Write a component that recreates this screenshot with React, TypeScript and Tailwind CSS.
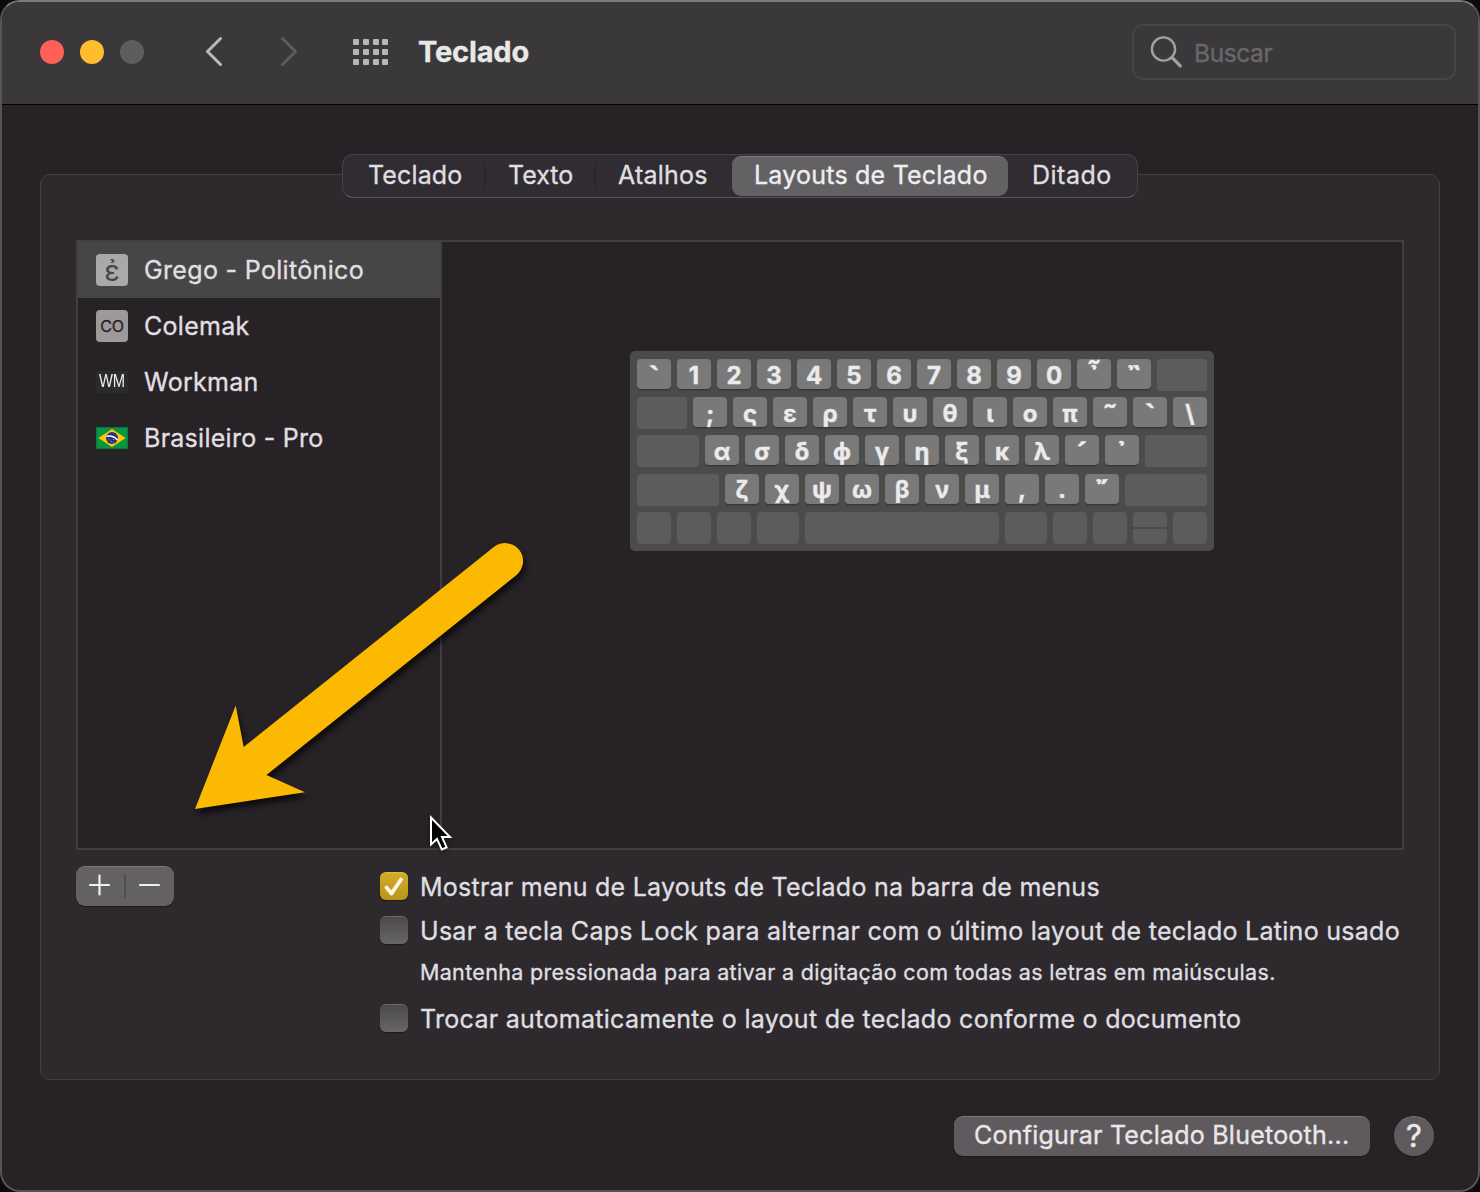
import React from 'react';

function T({ children, className = '' }: { children: string; className?: string }) {
  return <span className={`whitespace-pre [-webkit-text-stroke:0.35px] ${className}`}>{children}</span>;
}

function TitleBar() {
  return (
    <header className="flex h-[103px] shrink-0 items-center border-b border-black bg-[#3a383a] pb-0.5 pl-[38px] pr-[22px]">
      <div className="flex gap-4">
        <span className="size-6 rounded-full bg-[#ff5f57]" />
        <span className="size-6 rounded-full bg-[#febc2e]" />
        <span className="size-6 rounded-full bg-[#5e5c5f]" />
      </div>
      <svg className="mb-px ml-[60px]" width="20" height="32" viewBox="0 0 20 32" fill="none" stroke="#bbb9bc" strokeWidth="3" strokeLinecap="round" strokeLinejoin="round">
        <path d="M16.500 2.500 3.500 15.500l13 13" />
      </svg>
      <svg className="mb-px ml-[55px]" width="20" height="32" viewBox="0 0 20 32" fill="none" stroke="#5d5b5e" strokeWidth="3" strokeLinecap="round" strokeLinejoin="round">
        <path d="m3.500 2.500 13 13-13 13" />
      </svg>
      <div className="ml-[54px] grid grid-cols-4 gap-x-[3.8px] gap-y-[3.6px]">
        {Array.from({ length: 12 }, (_, i) => (
          <span key={i} className="size-1.5 rounded-[1px] bg-[#b7b5b8]" />
        ))}
      </div>
      <T className="mb-px ml-[29.6px] text-[29px] font-bold tracking-[-0.15px] text-[#e9e8e9]">Teclado</T>
      <div className="ml-auto flex h-14 w-[324px] items-center rounded-[11px] border-2 border-[#464447] pl-4">
        <svg width="34" height="34" viewBox="0 0 34 34" fill="none" stroke="#a19fa2" strokeLinecap="round">
          <circle cx="13.500" cy="14" r="11.600" strokeWidth="2.400" />
          <path d="m22 22.500 8.300 8.300" strokeWidth="3.200" />
        </svg>
        <T className="ml-[10px] pt-[3px] text-[24.5px] tracking-[-0.4px] text-[#69676a]">Buscar</T>
      </div>
    </header>
  );
}

function Tabs() {
  return (
    <nav className="-mt-[21px] flex h-11 w-[796px] items-center self-center rounded-[11px] border border-[#454246] border-b-[#58555a] bg-[#312c31] text-[25px] text-[#dfdee0]">
      <span className="flex w-[141px] pl-[25px]"><T className="tracking-[0.14px]">Teclado</T></span>
      <span className="h-6 w-0.5 bg-[#2a262a]" />
      <span className="flex w-[108px] pl-[22px]"><T>Texto</T></span>
      <span className="h-6 w-0.5 bg-[#2a262a]" />
      <span className="flex w-[136px] pl-[22px]"><T className="tracking-[0.2px]">Atalhos</T></span>
      <span className="flex h-10 w-[276px] items-center rounded-[9px] border-t border-[#7d7b7e] bg-[#636164] pb-px pl-[22px] text-[#efeeef]"><T className="tracking-[0.22px]">Layouts de Teclado</T></span>
      <span className="pl-6"><T className="tracking-[0.5px]">Ditado</T></span>
    </nav>
  );
}

function Flag() {
  return (
    <svg width="32" height="22" viewBox="0 0 32 22">
      <rect width="32" height="22" fill="#0b9444" />
      <rect x=".5" y=".5" width="31" height="21" fill="none" stroke="#077a35" />
      <path d="M2.500 11 16 2l13.500 9L16 20z" fill="#fecb00" />
      <circle cx="16" cy="11" r="6" fill="#2d2f87" />
      <path d="M10.400 9.200c4-.7 8.400.6 11.300 4" fill="none" stroke="#fff" strokeWidth="1.500" />
      <path d="M12.500 13h1m1.500 1.500h1m1-2h1m-1 3h1" stroke="#a9aad8" strokeWidth=".8" />
    </svg>
  );
}

function LayoutList() {
  return (
    <ul className="flex w-[364px] flex-col border-r-2 border-[#423f43] text-[25px] text-[#e0dfe0]">
      <li className="flex h-14 items-center bg-[#464646] pl-[18px]">
        <span className="mr-4 flex size-8 justify-center rounded-[4px] bg-[#a9a9a9] text-[29px] leading-[34px] text-[#464646]">ἐ</span>
        <T className="pt-0.5 tracking-[0.33px]">Grego - Politônico</T>
      </li>
      <li className="flex h-14 items-center pl-[18px]">
        <span className="mr-4 flex size-8 items-center justify-center rounded-[4px] bg-[#9c9a9c] text-[16px] tracking-[-0.3px] text-[#272226] [-webkit-text-stroke:0.3px]">CO</span>
        <T className="pt-0.5 tracking-[0.29px]">Colemak</T>
      </li>
      <li className="flex h-14 items-center pl-[18px]">
        <span className="mr-4 flex h-[22px] w-8 items-center justify-center bg-[#2b2b2b] pb-px font-['Liberation_Sans'] text-[18px] text-[#eeeeee]">
          <span className="scale-x-[0.82]">WM</span>
        </span>
        <T className="pt-0.5 tracking-[0.29px]">Workman</T>
      </li>
      <li className="flex h-14 items-center pl-[18px]">
        <span className="mr-4"><Flag /></span>
        <T className="pt-0.5 tracking-[0.27px]">Brasileiro - Pro</T>
      </li>
    </ul>
  );
}

const ACCENTS = '῏῍῎᾿῀`´';

function glyphClass(label: string) {
  if (ACCENTS.includes(label)) return "font-['Noto_Sans'] text-[27px] [-webkit-text-stroke:0.4px]";
  if (label === 'ν') return "-mt-px font-['Noto_Sans'] [-webkit-text-stroke:0.3px]";
  return '[-webkit-text-stroke:0.4px]';
}

function Key({ label }: { label: string }) {
  return (
    <span className="flex h-[30px] w-[34px] justify-center rounded-[4px] bg-[#797979] text-[24px] font-bold text-[#ebebeb] shadow-[0_1.5px_0_#373737]">
      <span className={glyphClass(label)}>{label}</span>
    </span>
  );
}

function Blank({ className }: { className: string }) {
  return <span className={`h-8 rounded-[4px] bg-[#5c5c5c] ${className}`} />;
}

function Keys({ labels }: { labels: string }) {
  return (
    <>
      {labels.split(' ').map((l) => (
        <Key key={l} label={l} />
      ))}
    </>
  );
}

function Keyboard() {
  return (
    <div className="ml-[188px] mt-[109px] flex h-[200px] w-[584px] flex-col gap-1.5 rounded-[5px] bg-[#4b4b4b] px-[7px] pt-2">
      <div className="flex h-8 gap-1.5 leading-[34px]">
        <Keys labels="` 1 2 3 4 5 6 7 8 9 0 ῏ ῍" />
        <Blank className="w-[50px]" />
      </div>
      <div className="flex h-8 gap-1.5 leading-[34px]">
        <Blank className="w-[50px]" />
        <Keys labels="; ς ε ρ τ υ θ ι ο π ῀ ` \" />
      </div>
      <div className="mb-px flex h-8 gap-1.5 leading-[34px]">
        <Blank className="w-[62px]" />
        <Keys labels="α σ δ ϕ γ η ξ κ λ ´ ᾿" />
        <Blank className="w-[62px]" />
      </div>
      <div className="flex h-8 gap-1.5 leading-[32px]">
        <Blank className="w-[82px]" />
        <Keys labels="ζ χ ψ ω β ν μ , . ῎" />
        <Blank className="w-[82px]" />
      </div>
      <div className="flex h-8 gap-1.5">
        <Blank className="w-[34px]" />
        <Blank className="w-[34px]" />
        <Blank className="w-[34px]" />
        <Blank className="w-[42px]" />
        <Blank className="w-[194px]" />
        <Blank className="w-[42px]" />
        <Blank className="w-[34px]" />
        <Blank className="w-[34px]" />
        <span className="flex w-[34px] flex-col gap-0.5">
          <span className="h-[15px] rounded-t-[4px] bg-[#5c5c5c]" />
          <span className="h-[15px] rounded-b-[4px] bg-[#5c5c5c]" />
        </span>
        <Blank className="w-[34px]" />
      </div>
    </div>
  );
}

function Checkbox({ checked }: { checked?: boolean }) {
  if (checked) {
    return (
      <span className="flex size-7 items-center justify-center rounded-[6px] border-t border-[#dbbb4a] bg-linear-to-b from-[#d3ac25] to-[#b9951c] shadow-[0_1px_1px_#1d191c]">
        <svg width="20" height="20" viewBox="0 0 20 20" fill="none" stroke="#fdf6e0" strokeWidth="3.800" strokeLinecap="round" strokeLinejoin="round">
          <path d="m2.500 10.500 5 6L17 2.500" />
        </svg>
      </span>
    );
  }
  return <span className="size-7 rounded-[6px] border-t border-[#6b696c] bg-linear-to-b from-[#4c494d] to-[#676568] shadow-[0_1px_1px_#1d191c]" />;
}

function Annotation() {
  return (
    <svg className="pointer-events-none absolute left-0 top-0" width="1480" height="1192" viewBox="0 0 1480 1192">
      <path
        d="M195 809 235.700 705.500 243.700 747 493.800 547A18 18 0 0 1 516.300 575.200L266.500 775 305 792.300Z"
        fill="#fcb902"
        className="drop-shadow-[2px_5px_3px_rgba(0,0,0,0.7)]"
      />
      <path
        d="M431 817.500V844.500L437 839 441.800 849.500 446.600 847.400 442 837H450z"
        fill="#000"
        stroke="#fff"
        strokeWidth="2"
        className="drop-shadow-[0_2px_2px_rgba(0,0,0,0.4)]"
      />
    </svg>
  );
}

export default function App() {
  return (
    <div className="relative h-[1192px] w-[1480px] overflow-hidden bg-[#0c0a0c] font-['Inter','Noto_Sans',sans-serif]">
      <div className="flex h-full flex-col overflow-hidden rounded-[20px] border-2 border-[#565457] border-t-[#7b797c] bg-[#272226]">
        <TitleBar />
        <main className="mx-[38px] mt-[69px] flex h-[906px] shrink-0 flex-col rounded-[10px] border-[1.5px] border-[#423f43] bg-[#2e292d]">
          <Tabs />
          <section className="ml-[35px] mt-[42px] flex h-[610px] w-[1328px] shrink-0 border-2 border-[#423f43] bg-[#272226]">
            <LayoutList />
            <Keyboard />
          </section>
          <section className="ml-[35px] mt-4 flex items-start">
            <div className="flex h-10 w-[98px] items-center rounded-[9px] border-t border-[#7b797c] bg-[#636164] shadow-[0_1px_1px_#1d191c]">
              <svg width="98" height="38" viewBox="0 1 98 38" fill="none" stroke="#efeef0" strokeWidth="2.200" strokeLinecap="round">
                <path d="M14 18h19M23.500 8.500v19M64 18h19" />
                <path d="M49 8v22" stroke="#4f4d50" strokeWidth="1.800" />
              </svg>
            </div>
            <div className="ml-[206px] flex flex-col pt-[6px] text-[25px] leading-[30px] text-[#dfdee0]">
              <label className="flex h-7 gap-3"><Checkbox checked /><T className="tracking-[0.24px]">Mostrar menu de Layouts de Teclado na barra de menus</T></label>
              <label className="mt-4 flex h-7 gap-3"><Checkbox /><T className="tracking-[0.276px]">Usar a tecla Caps Lock para alternar com o último layout de teclado Latino usado</T></label>
              <p className="ml-10 mt-[13px] h-7 text-[21.5px]"><T className="tracking-[0.315px]">Mantenha pressionada para ativar a digitação com todas as letras em maiúsculas.</T></p>
              <label className="mt-[19px] flex h-7 gap-3"><Checkbox /><T className="tracking-[0.295px]">Trocar automaticamente o layout de teclado conforme o documento</T></label>
            </div>
          </section>
        </main>
        <footer className="mt-9 flex items-center justify-end pr-11 text-[#e9e8e9]">
          <button className="flex h-10 w-[416px] items-center rounded-[9px] border-t border-[#7b797c] bg-[#5f5a5e] pb-0.5 pl-5 text-[25px] shadow-[0_1px_1px_#1d191c]"><T className="tracking-[0.235px]">Configurar Teclado Bluetooth...</T></button>
          <button className="ml-6 flex size-10 items-center justify-center rounded-full border-t border-[#7b797c] bg-[#5f5a5e] pb-0.5 text-[31px] leading-none shadow-[0_1px_1px_#1d191c] [-webkit-text-stroke:0.5px]">?</button>
        </footer>
      </div>
      <Annotation />
    </div>
  );
}
